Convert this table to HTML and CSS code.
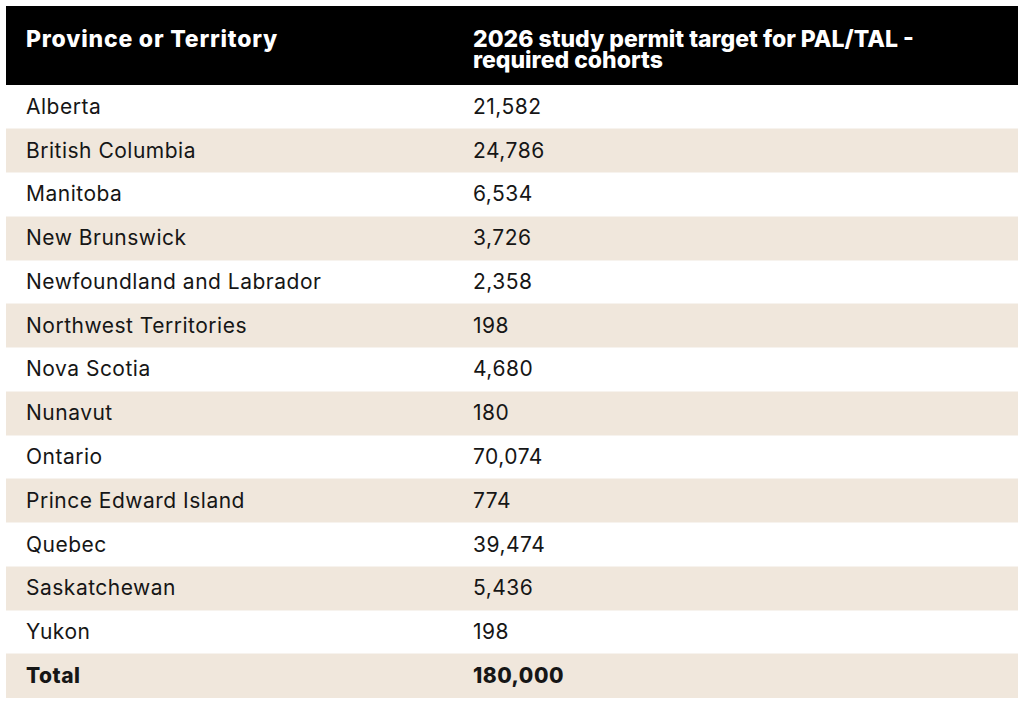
FILE: index.html
```html
<!DOCTYPE html>
<html lang="en">
<head>
<meta charset="utf-8">
<title>2026 study permit targets</title>
<link rel="stylesheet" href="styles.css">
</head>
<body>
<table class="permits">
  <thead>
    <tr>
      <th class="col-name">Province or Territory</th>
      <th class="col-value">2026 study permit target for PAL/TAL - required cohorts</th>
    </tr>
  </thead>
  <tbody>
    <tr><td>Alberta</td><td>21,582</td></tr>
    <tr><td>British Columbia</td><td>24,786</td></tr>
    <tr><td>Manitoba</td><td>6,534</td></tr>
    <tr><td>New Brunswick</td><td>3,726</td></tr>
    <tr><td>Newfoundland and Labrador</td><td>2,358</td></tr>
    <tr><td>Northwest Territories</td><td>198</td></tr>
    <tr><td>Nova Scotia</td><td>4,680</td></tr>
    <tr><td>Nunavut</td><td>180</td></tr>
    <tr><td>Ontario</td><td>70,074</td></tr>
    <tr><td>Prince Edward Island</td><td>774</td></tr>
    <tr><td>Quebec</td><td>39,474</td></tr>
    <tr><td>Saskatchewan</td><td>5,436</td></tr>
    <tr><td>Yukon</td><td>198</td></tr>
    <tr class="total"><td>Total</td><td>180,000</td></tr>
  </tbody>
</table>
</body>
</html>
```
FILE: styles.css
```css
html, body {
  margin: 0;
  padding: 0;
  background: #ffffff;
}

body {
  padding: 6px 6px 0 6px;
  font-family: Inter, "Noto Sans", sans-serif;
  color: #161616;
}

.permits {
  width: 1012px;
  border-collapse: collapse;
  table-layout: fixed;
}

.permits th {
  background: #000000;
  color: #ffffff;
  font-size: 23px;
  font-weight: 800;
  line-height: 21px;
  letter-spacing: 0.8px;
  text-align: left;
  vertical-align: top;
  height: 79px;
  box-sizing: border-box;
  padding: 23px 20px 0 20px;
}

.permits .col-name {
  width: 447px;
}

.permits .col-value {
  letter-spacing: 0;
  padding-right: 60px;
}

.permits td {
  font-size: 21px;
  line-height: 24px;
  letter-spacing: 0.5px;
  height: 43.77px;
  box-sizing: border-box;
  padding: 0 20px;
  vertical-align: middle;
}

.permits tbody tr:nth-child(even) td {
  background: #f0e7dc;
}

.permits tbody tr + tr td {
  border-top: 1px solid #f7f3ee;
}

.permits .total td {
  font-weight: 800;
  letter-spacing: 0.5px;
  height: 44px;
}
```
